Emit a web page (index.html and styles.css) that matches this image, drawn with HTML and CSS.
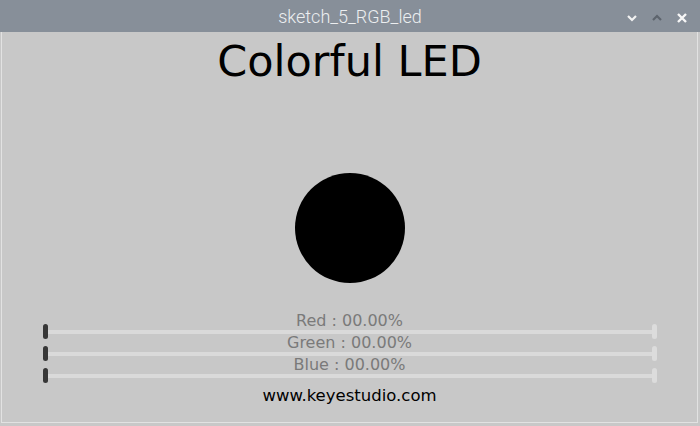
FILE: index.html
```html
<!DOCTYPE html>
<html>
<head>
<meta charset="utf-8">
<link rel="stylesheet" href="styles.css">
</head>
<body>
<div class="window">
  <header class="titlebar">
    <div class="title">sketch_5_RGB_led</div>
    <div class="controls">
      <svg class="btn" width="12" height="12" viewBox="0 0 12 12"><path d="M2 4 L6 8 L10 4" fill="none" stroke="#f2f2f2" stroke-width="2.2"/></svg>
      <svg class="btn" width="12" height="12" viewBox="0 0 12 12"><path d="M2 8 L6 4 L10 8" fill="none" stroke="#5d646d" stroke-width="2.2"/></svg>
      <svg class="btn" width="12" height="12" viewBox="0 0 12 12"><path d="M2 2 L10 10 M10 2 L2 10" fill="none" stroke="#f7f7f7" stroke-width="2.4"/></svg>
    </div>
  </header>
  <main class="canvas">
    <h1 class="heading">Colorful LED</h1>
    <div class="led"></div>
    <div class="sliders">
      <div class="row">
        <div class="label">Red : 00.00%</div>
        <div class="slider"><span class="knob dark"></span><span class="track"></span><span class="knob light"></span></div>
      </div>
      <div class="row">
        <div class="label">Green : 00.00%</div>
        <div class="slider"><span class="knob dark"></span><span class="track"></span><span class="knob light"></span></div>
      </div>
      <div class="row">
        <div class="label">Blue : 00.00%</div>
        <div class="slider"><span class="knob dark"></span><span class="track"></span><span class="knob light"></span></div>
      </div>
    </div>
    <div class="footer">www.keyestudio.com</div>
  </main>
</div>
</body>
</html>
```
FILE: styles.css
```css
html, body {
  margin: 0;
  padding: 0;
  background: #c8c8c8;
}
body {
  width: 700px;
  height: 426px;
  overflow: hidden;
  font-family: "DejaVu Sans", sans-serif;
}
.window {
  display: flex;
  flex-direction: column;
  width: 700px;
  height: 426px;
}
.titlebar {
  height: 32px;
  flex: none;
  background: #878f99;
  display: grid;
  grid-template-columns: 1fr;
  align-items: center;
  position: relative;
}
.title {
  text-align: center;
  font-family: Roboto, "Liberation Sans", sans-serif;
  font-weight: 300;
  font-size: 18px;
  color: #eceef0;
  line-height: 32px;
  padding-top: 1px;
}
.controls {
  position: absolute;
  right: 12px;
  top: 12px;
  display: flex;
  gap: 13px;
}
.btn { display: block; }
.canvas {
  margin-left: 1px;
  width: 695px;
  height: 390px;
  border: 1px solid #e2e2e2;
  border-top: none;
  background: #c8c8c8;
  display: flex;
  flex-direction: column;
  align-items: center;
}
.heading {
  margin: 4px 0 0;
  font-size: 43px;
  font-weight: normal;
  line-height: 50px;
  color: #000;
}
.led {
  margin-top: 87px;
  width: 110px;
  height: 110px;
  border-radius: 50%;
  background: #000;
}
.sliders {
  margin-top: 30px;
  display: flex;
  flex-direction: column;
  width: 614px;
}
.row {
  display: grid;
  height: 22px;
}
.row > * {
  grid-area: 1 / 1;
}
.label {
  align-self: start;
  text-align: center;
  font-size: 16px;
  line-height: 16px;
  color: #7a7a7a;
  position: relative;
  z-index: 1;
}
.slider {
  margin-top: 11px;
  height: 15px;
  display: flex;
  align-items: center;
}
.track {
  flex: 1;
  height: 4px;
  background: #dadada;
}
.knob {
  width: 5px;
  height: 15px;
  border-radius: 3px;
  flex: none;
}
.knob.dark {
  background: #373737;
  margin-right: -3px;
  position: relative;
  z-index: 1;
}
.knob.light {
  background: #dcdcdc;
  margin-left: -1px;
}
.footer {
  margin-top: 7px;
  font-size: 16.5px;
  line-height: 20px;
  color: #000;
}
```
